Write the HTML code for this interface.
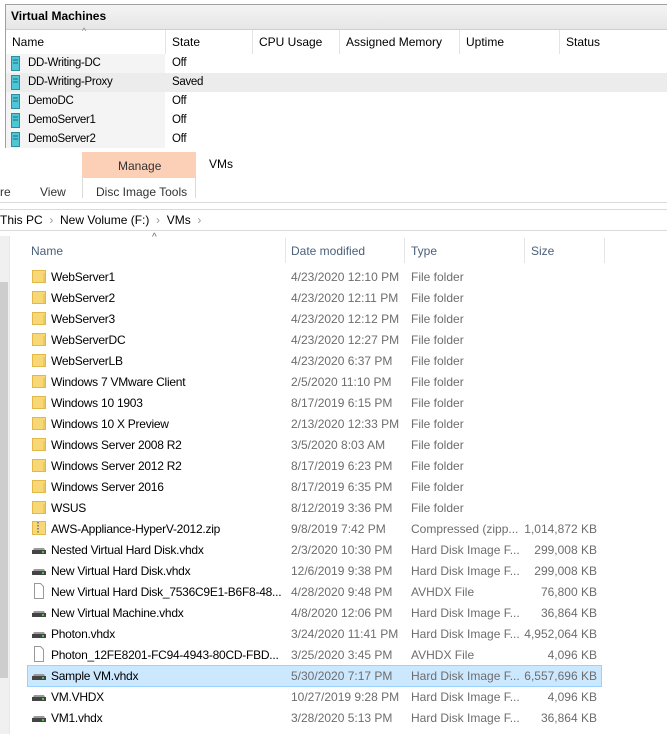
<!DOCTYPE html><html><head><style>
body{margin:0;width:667px;height:734px;background:#fff;position:relative;overflow:hidden;font-family:"Liberation Sans",sans-serif;font-size:12px;color:#000}
.a{position:absolute;white-space:nowrap}
.fi{position:absolute;left:31px;width:16px;height:16px}
</style></head><body>
<div class="a" style="left:5px;top:4px;width:662px;height:1px;background:#a0a0a0"></div>
<div class="a" style="left:5px;top:4px;width:1px;height:144px;background:#a0a0a0"></div>
<div class="a" style="left:6px;top:5px;width:661px;height:24px;background:linear-gradient(#f4f4f4,#e6e6e6)"></div>
<div class="a" style="left:11px;top:9px;font-weight:bold;font-size:12px">Virtual Machines</div>
<div class="a" style="left:6px;top:29px;width:661px;height:1px;background:#cfcfcf"></div>
<div class="a" style="left:6px;top:54px;width:159px;height:94px;background:#f4f4f4"></div>
<div class="a" style="left:6px;top:73px;width:661px;height:19px;background:#ececec"></div>
<div class="a" style="left:165px;top:30px;width:1px;height:24px;background:#e4e4e4"></div>
<div class="a" style="left:252px;top:30px;width:1px;height:24px;background:#e4e4e4"></div>
<div class="a" style="left:339px;top:30px;width:1px;height:24px;background:#e4e4e4"></div>
<div class="a" style="left:459px;top:30px;width:1px;height:24px;background:#e4e4e4"></div>
<div class="a" style="left:559px;top:30px;width:1px;height:24px;background:#e4e4e4"></div>
<div class="a" style="left:82px;top:26px;font-size:9px;color:#888">^</div>
<div class="a" style="left:12px;top:35px">Name</div>
<div class="a" style="left:172px;top:35px">State</div>
<div class="a" style="left:259px;top:35px">CPU Usage</div>
<div class="a" style="left:346px;top:35px">Assigned Memory</div>
<div class="a" style="left:466px;top:35px">Uptime</div>
<div class="a" style="left:566px;top:35px">Status</div>
<div style="font-size:11.5px;letter-spacing:-0.3px">
<div class="a" style="left:28px;top:57px">DD-Writing-DC</div><div class="a" style="left:172px;top:57px">Off</div>
<div class="a" style="left:28px;top:76px">DD-Writing-Proxy</div><div class="a" style="left:172px;top:76px">Saved</div>
<div class="a" style="left:28px;top:95px">DemoDC</div><div class="a" style="left:172px;top:95px">Off</div>
<div class="a" style="left:28px;top:114px">DemoServer1</div><div class="a" style="left:172px;top:114px">Off</div>
<div class="a" style="left:28px;top:133px">DemoServer2</div><div class="a" style="left:172px;top:133px">Off</div>
</div>
<svg class="a" style="left:10px;top:55px" width="12" height="95">
<g fill="#4fc6d6" stroke="#2a8ea0"><rect x="1.5" y="1.5" width="8" height="14"/><rect x="1.5" y="20.5" width="8" height="14"/><rect x="1.5" y="39.5" width="8" height="14"/><rect x="1.5" y="58.5" width="8" height="14"/><rect x="1.5" y="77.5" width="8" height="14"/></g>
<g stroke="#1d6f80"><path d="M3 5h5M3 8h5M3 24h5M3 27h5M3 43h5M3 46h5M3 62h5M3 65h5M3 81h5M3 84h5"/></g></svg>
<div class="a" style="left:82px;top:152px;width:114px;height:26px;background:#fcd0b6"></div>
<div class="a" style="left:118px;top:159px;color:#333">Manage</div>
<div class="a" style="left:209px;top:157px">VMs</div>
<div class="a" style="left:82px;top:178px;width:1px;height:20px;background:#dadada"></div>
<div class="a" style="left:195px;top:178px;width:1px;height:20px;background:#dadada"></div>
<div class="a" style="left:0px;top:185px;color:#333">re</div>
<div class="a" style="left:40px;top:185px;color:#333">View</div>
<div class="a" style="left:96px;top:185px;color:#333">Disc Image Tools</div>
<div class="a" style="left:0;top:202px;width:667px;height:1px;background:#dadada"></div>
<div class="a" style="left:0;top:209px;width:667px;height:1px;background:#dadada"></div>
<div class="a" style="left:0px;top:213px">This PC &nbsp;<span style="color:#999">›</span>&nbsp; New Volume (F:) &nbsp;<span style="color:#999">›</span>&nbsp; VMs &nbsp;<span style="color:#999">›</span></div>
<div class="a" style="left:0;top:230px;width:667px;height:1px;background:#dadada"></div>
<div class="a" style="left:0;top:236px;width:9px;height:498px;background:#f0f0f0"></div>
<div class="a" style="left:0;top:282px;width:8px;height:396px;background:#cdcdcd"></div>
<div class="a" style="left:9px;top:236px;width:1px;height:498px;background:#e8e8e8"></div>
<div class="a" style="left:152px;top:232px;font-size:10px;color:#666">^</div>
<div class="a" style="left:31px;top:244px;color:#4c607a">Name</div>
<div class="a" style="left:291px;top:244px;color:#4c607a">Date modified</div>
<div class="a" style="left:411px;top:244px;color:#4c607a">Type</div>
<div class="a" style="left:531px;top:244px;color:#4c607a">Size</div>
<div class="a" style="left:285px;top:238px;width:1px;height:25px;background:#e5e5e5"></div>
<div class="a" style="left:404px;top:238px;width:1px;height:25px;background:#e5e5e5"></div>
<div class="a" style="left:524px;top:238px;width:1px;height:25px;background:#e5e5e5"></div>
<div class="a" style="left:604px;top:238px;width:1px;height:25px;background:#e5e5e5"></div>
<div class="a" style="left:27px;top:665px;width:573px;height:20px;background:#cce8ff;border:1px solid #99d1ff"></div>
<div id="rows"></div>
<script>
var d=[["f","WebServer1","4/23/2020 12:10 PM","File folder",""],["f","WebServer2","4/23/2020 12:11 PM","File folder",""],["f","WebServer3","4/23/2020 12:12 PM","File folder",""],["f","WebServerDC","4/23/2020 12:27 PM","File folder",""],["f","WebServerLB","4/23/2020 6:37 PM","File folder",""],["f","Windows 7 VMware Client","2/5/2020 11:10 PM","File folder",""],["f","Windows 10 1903","8/17/2019 6:15 PM","File folder",""],["f","Windows 10 X Preview","2/13/2020 12:33 PM","File folder",""],["f","Windows Server 2008 R2","3/5/2020 8:03 AM","File folder",""],["f","Windows Server 2012 R2","8/17/2019 6:23 PM","File folder",""],["f","Windows Server 2016","8/17/2019 6:35 PM","File folder",""],["f","WSUS","8/12/2019 3:36 PM","File folder",""],["z","AWS-Appliance-HyperV-2012.zip","9/8/2019 7:42 PM","Compressed (zipp...","1,014,872 KB"],["h","Nested Virtual Hard Disk.vhdx","2/3/2020 10:30 PM","Hard Disk Image F...","299,008 KB"],["h","New Virtual Hard Disk.vhdx","12/6/2019 9:38 PM","Hard Disk Image F...","299,008 KB"],["d","New Virtual Hard Disk_7536C9E1-B6F8-48...","4/28/2020 9:48 PM","AVHDX File","76,800 KB"],["h","New Virtual Machine.vhdx","4/8/2020 12:06 PM","Hard Disk Image F...","36,864 KB"],["h","Photon.vhdx","3/24/2020 11:41 PM","Hard Disk Image F...","4,952,064 KB"],["d","Photon_12FE8201-FC94-4943-80CD-FBD...","3/25/2020 3:45 PM","AVHDX File","4,096 KB"],["h","Sample VM.vhdx","5/30/2020 7:17 PM","Hard Disk Image F...","6,557,696 KB"],["h","VM.VHDX","10/27/2019 9:28 PM","Hard Disk Image F...","4,096 KB"],["h","VM1.vhdx","3/28/2020 5:13 PM","Hard Disk Image F...","36,864 KB"]];
var ic={f:'<svg class="fi" viewBox="0 0 16 16"><path d="M1.5 2.5h13v12h-13z" fill="#f8d775" stroke="#e3b84a"/><path d="M13 5v9" stroke="#e3b84a"/></svg>',
z:'<svg class="fi" viewBox="0 0 16 16"><path d="M1.5 1.5h13v13h-13z" fill="#f8d775" stroke="#e3b84a"/><path d="M7 2v11" stroke="#888" stroke-width="2" stroke-dasharray="1.5 1.5"/></svg>',
h:'<svg class="fi" viewBox="0 0 16 16"><path d="M2 9l1-2h10l1 2z" fill="#9a9a9a"/><rect x="1" y="9" width="14" height="4" fill="#444"/><rect x="11" y="10" width="2" height="2" fill="#4c4"/></svg>',
d:'<svg class="fi" viewBox="0 0 16 16"><path d="M3.5 .5h6l3 3v12h-9z" fill="#fff" stroke="#999"/></svg>'};
var h="";d.forEach(function(r,i){var t=266+i*21;h+=ic[r[0]].replace('class="fi"','class="fi" style="top:'+(t+2)+'px"')+'<div class="a" style="left:51px;top:'+(t+4)+'px;letter-spacing:-0.25px">'+r[1]+'</div><div class="a" style="left:291px;top:'+(t+4)+'px;color:#6d6d6d">'+r[2]+'</div><div class="a" style="left:411px;top:'+(t+4)+'px;color:#6d6d6d">'+r[3]+'</div><div class="a" style="right:70px;top:'+(t+4)+'px;color:#6d6d6d">'+r[4]+'</div>';});
document.getElementById("rows").innerHTML=h;
</script>
</body></html>
